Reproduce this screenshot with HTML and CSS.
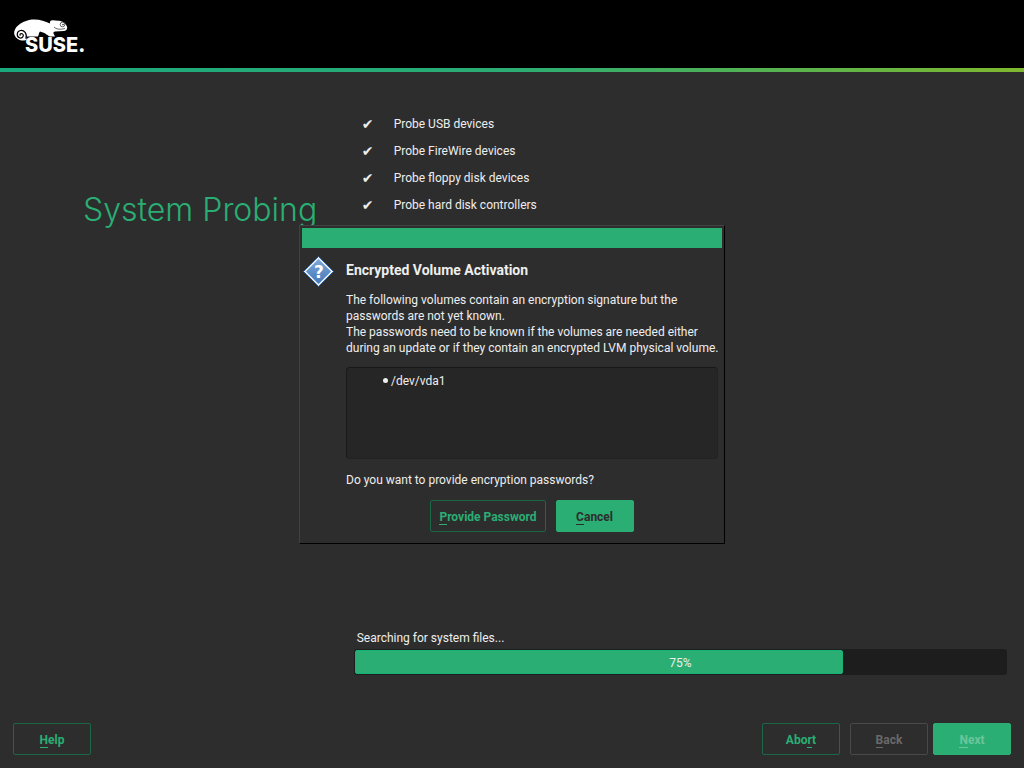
FILE: index.html
```html
<!DOCTYPE html>
<html lang="en">
<head>
<meta charset="utf-8">
<title>System Probing</title>
<link rel="stylesheet" href="styles.css">
</head>
<body>
<div class="installer">
  <header class="banner">
    <svg class="logo" width="76" height="38" viewBox="0 0 76 38" role="img" aria-label="SUSE">
      <path class="logo-body" d="M14 20C12 23 3 22 1.200 15C0.500 8 8 3 16 1C24 -0.500 31 1.500 37 4.500C36.500 2 38 1 40 1.200L45 1.800C48 2 52 3 53 6C55 8 54.500 11.500 51 12L42 12.500C40 13 40 14 41 15.500L42 17.500L37 17.500C35 17 33 14 27 12.500C25.500 14 26 16 25 17.500L14 17.500Z"/>
      <path class="logo-spiral" d="M13 20C14.500 14 11 11 7.500 11.500C3.500 12 3 18 7 19C10.500 19.500 11.500 15 8.500 14.500C7 14.500 6.500 16 7.500 16.500"/>
      <path class="logo-line" d="M41 8Q44 11.500 52 9.500"/>
      <circle class="logo-eye" cx="49.500" cy="5.500" r="2.300"/>
      <circle class="logo-pupil" cx="50" cy="5.500" r="0.700"/>
      <text class="logo-text" x="12" y="33">SUSE.</text>
    </svg>
  </header>

  <main class="content">
    <h1 class="title">System Probing</h1>
    <section class="progress-pane">
      <ul class="steps">
        <li class="step"><span class="tick">✔</span>Probe USB devices</li>
        <li class="step"><span class="tick">✔</span>Probe FireWire devices</li>
        <li class="step"><span class="tick">✔</span>Probe floppy disk devices</li>
        <li class="step"><span class="tick">✔</span>Probe hard disk controllers</li>
      </ul>
      <div class="status">
        <p class="status-label" id="status">Searching for system files...</p>
        <div class="bar" role="progressbar" aria-labelledby="status" aria-valuenow="75" aria-valuemin="0" aria-valuemax="100">
          <div class="bar-fill" style="width:75%"></div>
          <span class="bar-value">75%</span>
        </div>
      </div>
    </section>
  </main>

  <footer class="actions">
    <button class="btn" type="button"><span class="key">H</span>elp</button>
    <button class="btn push" type="button">Abo<span class="key">r</span>t</button>
    <button class="btn back" type="button" disabled><span class="key">B</span>ack</button>
    <button class="btn primary" type="button" disabled><span class="key">N</span>ext</button>
  </footer>
</div>

<div class="overlay">
  <section class="dialog" role="dialog" aria-labelledby="dialog-title">
    <div class="dialog-bar"></div>
    <div class="dialog-main">
      <svg class="question" width="32" height="32" viewBox="0 0 32 32" aria-hidden="true">
        <defs>
          <linearGradient id="blue" x1="0" y1="0" x2="0" y2="1">
            <stop offset="0" stop-color="#7fa8d9"/>
            <stop offset="1" stop-color="#4377b8"/>
          </linearGradient>
        </defs>
        <path d="M16.500 0.500L31.500 15.500L16.500 30.500L1.500 15.500Z" fill="#e6effa" stroke="#2e60a4" stroke-width="1" stroke-linejoin="round"/>
        <path d="M16.500 3L29 15.500L16.500 28L4 15.500Z" fill="url(#blue)"/>
        <text class="question-mark" x="17" y="22" text-anchor="middle">?</text>
      </svg>
      <div class="dialog-text">
        <h2 class="dialog-title" id="dialog-title">Encrypted Volume Activation</h2>
        <p class="message">The following volumes contain an encryption signature but the<br>passwords are not yet known.<br>The passwords need to be known if the volumes are needed either<br>during an update or if they contain an encrypted LVM physical volume.</p>
        <ul class="volumes">
          <li class="volume">/dev/vda1</li>
        </ul>
        <p class="message">Do you want to provide encryption passwords?</p>
      </div>
    </div>
    <div class="dialog-actions">
      <button class="btn provide" type="button"><span class="key">P</span>rovide Password</button>
      <button class="btn primary" type="button"><span class="key">C</span>ancel</button>
    </div>
  </section>
</div>
</body>
</html>
```
FILE: styles.css
```css
* {
  box-sizing: border-box;
}

body {
  margin: 0;
  background: #2d2d2d;
  color: #eeeeee;
  font: 12px/16px Roboto, sans-serif;
}

h1, h2, p, ul {
  margin: 0;
  padding: 0;
}

ul {
  list-style: none;
}

.installer {
  display: flex;
  flex-direction: column;
  min-height: 100vh;
}

.banner {
  height: 72px;
  padding: 19px 13px 0;
  background: linear-gradient(90deg, #1ba87d 0%, #2bad74 50%, #80b82e 100%) bottom / 100% 4px no-repeat #000000;
}

.logo {
  display: block;
  overflow: visible;
}

.logo-body {
  fill: #ffffff;
}

.logo-spiral {
  fill: none;
  stroke: #000000;
  stroke-width: 1.2;
}

.logo-line {
  fill: none;
  stroke: #000000;
  stroke-width: 0.6;
}

.logo-eye {
  fill: #ffffff;
  stroke: #000000;
  stroke-width: 0.6;
}

.logo-pupil {
  fill: #000000;
}

.logo-text {
  fill: #ffffff;
  font: 800 20px Inter, sans-serif;
}

.content {
  flex: 1;
  display: grid;
  grid-template-columns: 1fr 2fr;
  padding: 44px 17px 0 27px;
}

.title {
  padding: 74px 0 0 56px;
  color: #2aae74;
  font: 300 32px/40px Inter, sans-serif;
  white-space: nowrap;
}

.progress-pane {
  display: flex;
  flex-direction: column;
  justify-content: space-between;
}

.steps {
  display: grid;
  gap: 11px;
  padding-left: 8px;
}

.step {
  display: flex;
}

.tick {
  width: 32px;
  font-family: "DejaVu Sans", sans-serif;
  font-size: 14px;
}

.status-label {
  padding-left: 3px;
  margin-bottom: 3px;
}

.bar {
  display: grid;
  height: 26px;
  padding: 1px;
  border-radius: 3px;
  background: #1d1d1d;
}

.bar-fill, .bar-value {
  grid-area: 1 / 1;
}

.bar-fill {
  border: 1px solid #16b377;
  border-radius: 2px;
  background: #2aae74;
}

.bar-value {
  padding-top: 2px;
  align-self: center;
  text-align: center;
}

.actions {
  display: flex;
  padding: 48px 13px 13px;
}

.btn {
  min-width: 78px;
  height: 32px;
  padding: 2px 8px 0;
  border: 1px solid #1d6749;
  border-radius: 2px;
  background: transparent;
  color: #2aae74;
  font: 700 12px/16px Roboto, sans-serif;
}

.key {
  border-bottom: 1px solid;
}

.push {
  margin-left: auto;
}

.back {
  margin: 0 5px 0 10px;
  border-color: #494949;
  color: #696969;
}

.primary {
  border-color: #2aae74;
  background: #2aae74;
  color: #2d2d2d;
}

.primary:disabled {
  color: #6ac69d;
}

.overlay {
  position: fixed;
  inset: 0;
  display: grid;
  place-items: center;
}

.dialog {
  width: 426px;
  padding: 2px 2px 11px;
  border: 1px solid;
  border-color: #414141 #000000 #000000 #414141;
  background: #2d2d2d;
}

.dialog-bar {
  height: 20px;
  background: #2aae74;
}

.dialog-main {
  display: flex;
  gap: 12px;
  padding: 8px 4px 0 0;
}

.question {
  flex: none;
}

.question-mark {
  fill: #ffffff;
  font: 700 17px "DejaVu Sans", sans-serif;
}

.dialog-text {
  flex: 1;
}

.dialog-title {
  padding: 4px 0 12px;
  font-size: 14px;
  line-height: 20px;
}

.message {
  white-space: nowrap;
}

.volumes {
  height: 92px;
  margin: 11px 0 13px;
  padding: 5px 36px;
  border: 1px solid #222222;
  border-top-color: #171717;
  border-left-color: #1a1a1a;
  border-radius: 4px;
  background: #262626;
}

.volume {
  display: flex;
  align-items: center;
  gap: 3px;
}

.volume::before {
  content: "";
  width: 5px;
  height: 5px;
  border-radius: 50%;
  background: #eeeeee;
}

.dialog-actions {
  display: flex;
  justify-content: center;
  gap: 10px;
  padding: 12px 0 0 40px;
}
```
